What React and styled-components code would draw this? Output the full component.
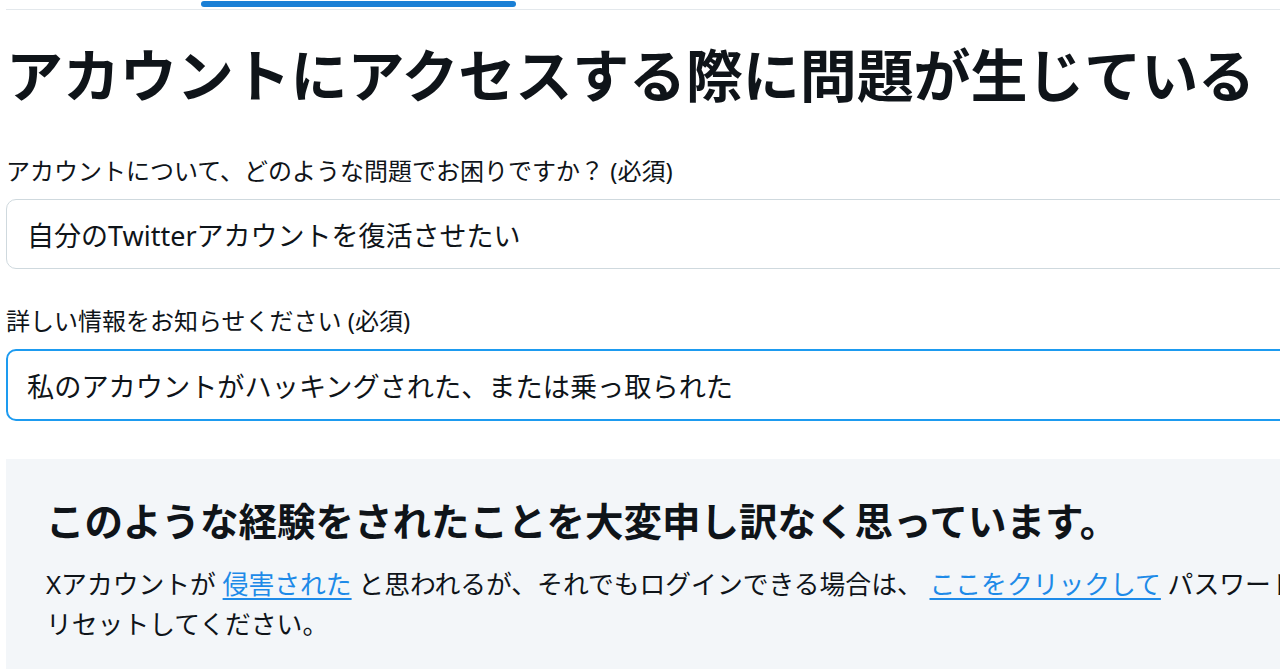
import styled, { createGlobalStyle } from "styled-components";

const GlobalStyle = createGlobalStyle`
  html, body {
    margin: 0;
    padding: 0;
    background: #fff;
    overflow: hidden;
  }
  body {
    font-family: "Noto Sans", "Noto Sans CJK JP", sans-serif;
    color: #0f1419;
  }
`;

const App = () => {
  return (
    <Page>
      <GlobalStyle />
      <TabBar>
        <Tab />
        <Tab $active />
      </TabBar>
      <Title>アカウントにアクセスする際に問題が生じている</Title>
      <Field>
        <Label>アカウントについて、どのような問題でお困りですか？ (必須)</Label>
        <Input readOnly value="自分のTwitterアカウントを復活させたい" />
      </Field>
      <Field>
        <Label>詳しい情報をお知らせください (必須)</Label>
        <Input
          $focused
          readOnly
          value="私のアカウントがハッキングされた、または乗っ取られた"
        />
      </Field>
      <Notice>
        <NoticeTitle>
          このような経験をされたことを大変申し訳なく思っています。
        </NoticeTitle>
        <NoticeText>
          Xアカウントが <Link href="#">侵害された</Link>{" "}
          と思われるが、それでもログインできる場合は、{" "}
          <Link href="#">ここをクリックして</Link>{" "}
          パスワードをリセットしてください。
        </NoticeText>
      </Notice>
    </Page>
  );
};

export default App;

const Page = styled.div`
  width: 1376px;
  padding-left: 6px;
  box-sizing: border-box;
`;

const TabBar = styled.div`
  display: flex;
  align-items: flex-end;
  height: 10px;
  box-sizing: border-box;
  padding-bottom: 2px;
  border-bottom: 1px solid #e3e8ec;
`;

const Tab = styled.div`
  width: ${(props) => (props.$active ? "315px" : "195px")};
  height: 6px;
  border-radius: 3px;
  background: ${(props) => (props.$active ? "#1a7fd5" : "transparent")};
`;

const Title = styled.h1`
  margin: 27px 0 48px;
  font-family: "Noto Sans CJK JP", sans-serif;
  font-size: 57px;
  font-weight: 700;
  line-height: 70px;
  letter-spacing: -0.1px;
  white-space: nowrap;
  color: #0f1419;
`;

const Field = styled.div`
  display: flex;
  flex-direction: column;
  gap: 12px;
  & + & {
    margin-top: 36px;
  }
`;

const Label = styled.label`
  font-family: "Noto Sans", "Noto Sans CJK JP", sans-serif;
  font-size: 24px;
  line-height: 32px;
  color: #0f1419;
`;

const Input = styled.input`
  all: unset;
  display: block;
  box-sizing: border-box;
  width: 100%;
  height: ${(props) => (props.$focused ? "72px" : "70px")};
  padding: 0 ${(props) => (props.$focused ? "19px" : "20px")};
  border: ${(props) =>
    props.$focused ? "2.5px solid #1d9bf0" : "1px solid #cfd9de"};
  border-radius: 10px;
  background: #fff;
  font-family: "Noto Sans", "Noto Sans CJK JP", sans-serif;
  font-size: ${(props) => (props.$focused ? "27.2px" : "27px")};
  color: #0f1419;
`;

const Notice = styled.section`
  margin-top: 38px;
  padding: 35px 40px 40px;
  background: #f3f6f9;
  min-height: 220px;
  box-sizing: border-box;
`;

const NoticeTitle = styled.h2`
  margin: 0 0 20px;
  font-family: "Noto Sans CJK JP", sans-serif;
  font-size: 38.5px;
  font-weight: 700;
  line-height: 50px;
  white-space: nowrap;
  color: #0f1419;
`;

const NoticeText = styled.p`
  margin: 0;
  font-family: "Noto Sans", "Noto Sans CJK JP", sans-serif;
  font-size: 25.8px;
  line-height: 40px;
  color: #0f1419;
`;

const Link = styled.a`
  color: #1d8ae8;
  text-decoration: underline;
  text-underline-offset: 4px;
  text-decoration-thickness: 2px;
`;
